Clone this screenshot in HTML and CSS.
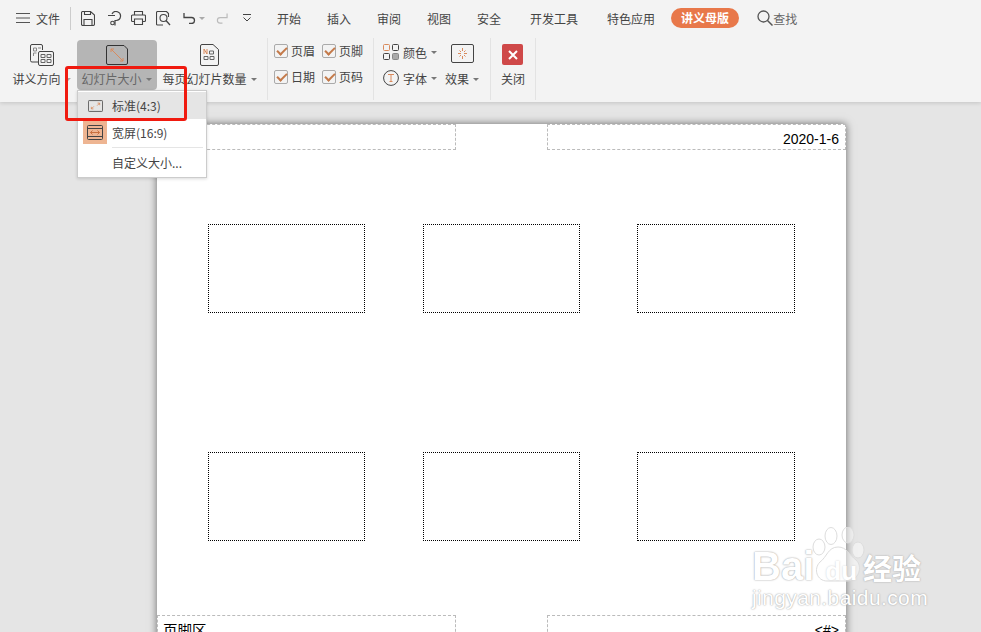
FILE: index.html

```html
<!DOCTYPE html>
<html lang="zh-CN">
<head>
    <meta charset="UTF-8">
    <title>讲义母版</title>
    <link rel="stylesheet" href="styles.css">
</head>
<body>
    <div class="ribbon">
        <div class="topbar">
            <svg class="menu-ico" width="14" height="10" viewBox="0 0 14 10"><path d="M0 .5h14M0 5h14M0 9.5h14" stroke="#555" fill="none"/></svg>
            <span class="file">文件</span>
            <span class="divider"></span>
            <div class="quick">
                <svg width="14" height="15" viewBox="0 0 14 15"><path d="M1.500.5h8l4 3.500v9a1.500 1.500 0 0 1-1.500 1.500H1.500a1.500 1.500 0 0 1-1-1.500V2a1.500 1.500 0 0 1 1-1.500zM3 14.500v-6h8v6M3.500.5v3h6v-3" stroke="#444" fill="none" stroke-width="1.100"/></svg>
                <svg width="14" height="15" viewBox="0 0 14 15"><path d="M0 4.500h7M4 3a4.500 4.500 0 1 1 4 6.500H7v5" stroke="#444" fill="none" stroke-width="1.200"/><circle cx="4.500" cy="12" r="1.800" stroke="#444" fill="none" stroke-width="1.100"/></svg>
                <svg width="15" height="14" viewBox="0 0 15 14"><path d="M3.500 4V.5h8V4M3 10.500H1.500a1 1 0 0 1-1-1V5a1 1 0 0 1 1-1h12a1 1 0 0 1 1 1v4.500a1 1 0 0 1-1 1H12M3.500 8h8v5.500h-8z" stroke="#444" fill="none" stroke-width="1.100"/></svg>
                <svg width="15" height="15" viewBox="0 0 15 15"><path d="M7 14H1.500a1 1 0 0 1-1-1V1.500a1 1 0 0 1 1-1h9l2 2V6" stroke="#444" fill="none" stroke-width="1.100"/><circle cx="7.500" cy="7" r="3.500" stroke="#444" fill="none" stroke-width="1.100"/><path d="M10 9.500l4 4.500" stroke="#444" stroke-width="1.300"/></svg>
                <svg class="undo" width="13" height="12" viewBox="0 0 13 12"><path d="M3.500 5.500h5a3 3 0 0 1 0 6H6M1 1v4.500h4.500" stroke="#444" fill="none" stroke-width="1.300"/></svg>
                <span class="caret small"></span>
                <svg class="redo" width="12" height="12" viewBox="0 0 13 12"><path d="M9.500 5.500h-5a3 3 0 0 0 0 6H7M12 1v4.500H7.500" stroke="#bbb" fill="none" stroke-width="1.300"/></svg>
                <svg class="more" width="8" height="8" viewBox="0 0 8 8"><path d="M0 .5h8M.5 3.500L4 7l3.500-3.500" stroke="#444" fill="none"/></svg>
            </div>
            <ul class="tabs">
                <li>开始</li>
                <li>插入</li>
                <li>审阅</li>
                <li>视图</li>
                <li>安全</li>
                <li class="wide">开发工具</li>
                <li class="wide">特色应用</li>
            </ul>
            <span class="pill">讲义母版</span>
            <div class="search">
                <svg width="16" height="16" viewBox="0 0 16 16"><circle cx="6.500" cy="6.500" r="5.500" stroke="#555" fill="none" stroke-width="1.300"/><path d="M10.500 10.500l5 5" stroke="#555" stroke-width="1.500"/></svg>
                <span>查找</span>
            </div>
        </div>
        <div class="tools">
            <div class="group group-size">
                <div class="tool tool-dir">
                    <svg width="24" height="22" viewBox="0 0 24 22"><path d="M9 18H2a1.500 1.500 0 0 1-1.500-1.500V2A1.500 1.500 0 0 1 2 .5h9A1.500 1.500 0 0 1 12.500 2v4" stroke="#444" fill="none"/><path d="M3.500 4h3v3h-3zM8 4h3M3.500 9h3M3.500 9v3" stroke="#888" fill="none"/><rect x="8.500" y="7.500" width="15" height="14" rx="1.500" fill="#f3f3f3" stroke="#444"/><path d="M11 10.500h4v3h-4zM17 10.500h4v3h-4zM11 15.500h4v3h-4zM17 15.500h4v3h-4z" stroke="#666" fill="none"/></svg>
                    <span class="label">讲义方向<i class="caret faint"></i></span>
                </div>
                <div class="tool tool-active">
                    <svg width="22" height="20" viewBox="0 0 22 20"><path d="M2 .5h16l3.500 3.500v14a1.500 1.500 0 0 1-1.500 1.500H2A1.500 1.500 0 0 1 .5 18V2A1.500 1.500 0 0 1 2 .5z" stroke="#333" fill="#b5b5b5"/><path d="M5 4l12 12M5 4h3M5 4v3M17 16h-3M17 16v-3" stroke="#d98a5c" fill="none"/></svg>
                    <span class="label">幻灯片大小<i class="caret"></i></span>
                </div>
                <div class="tool tool-count">
                    <svg width="19" height="22" viewBox="0 0 19 22"><path d="M2 .5h11l5.500 5v14.500a1.500 1.500 0 0 1-1.500 1.500H2A1.500 1.500 0 0 1 .5 20V2A1.500 1.500 0 0 1 2 .5z" stroke="#444" fill="none"/><path d="M4 5V10M4 5l3 5V5" stroke="#d98a5c" fill="none"/><path d="M9.500 7h4v3h-4zM4 12.500h4v3H4zM10 12.500h4v3h-4z" stroke="#666" fill="none"/></svg>
                    <span class="label">每页幻灯片数量<i class="caret"></i></span>
                </div>
            </div>
            <div class="group group-checks">
                <label class="check"><i class="box"></i>页眉</label>
                <label class="check"><i class="box"></i>页脚</label>
                <label class="check"><i class="box"></i>日期</label>
                <label class="check"><i class="box"></i>页码</label>
            </div>
            <div class="group group-theme">
                <div class="theme-rows">
                    <div class="theme-row">
                        <svg width="16" height="16" viewBox="0 0 16 16"><rect x=".5" y=".5" width="6" height="6" rx="1" stroke="#d98a5c" fill="none"/><rect x="9.500" y=".5" width="6" height="6" rx="1" stroke="#444" fill="none"/><rect x=".5" y="9.500" width="6" height="6" rx="1" stroke="#444" fill="none"/><rect x="9.500" y="9.500" width="6" height="6" rx="1" fill="#aaa" stroke="#888"/></svg>
                        <span>颜色</span><i class="caret"></i>
                    </div>
                    <div class="theme-row">
                        <svg width="16" height="16" viewBox="0 0 16 16"><circle cx="8" cy="8" r="7.400" stroke="#444" fill="none"/><path d="M5 4.500h6M8 4.500v7M6.500 11.500h3" stroke="#d98a5c" fill="none"/></svg>
                        <span>字体</span><i class="caret"></i>
                    </div>
                </div>
                <div class="effect">
                    <svg width="23" height="19" viewBox="0 0 23 19"><rect x=".5" y=".5" width="22" height="18" rx="1.500" stroke="#444" fill="none"/><path d="M11.500 4v3M11.500 12v3M7 9.500h3M13 9.500h3M8.500 6.500l1.500 1.500M14.500 6.500L13 8M8.500 12.500L10 11M14.500 12.500L13 11" stroke="#d98a5c" fill="none"/></svg>
                    <span class="label">效果<i class="caret"></i></span>
                </div>
            </div>
            <div class="group group-close">
                <div class="tool">
                    <span class="close-ico"><svg width="10" height="10" viewBox="0 0 10 10"><path d="M1 1l8 8M9 1l-8 8" stroke="#fff" stroke-width="2"/></svg></span>
                    <span class="label">关闭</span>
                </div>
            </div>
        </div>
    </div>

    <div class="workspace">
        <div class="page">
            <div class="page-band">
                <div class="zone">页眉区</div>
                <div class="zone zone-r">2020-1-6</div>
            </div>
            <div class="slides">
                <div class="slide"></div>
                <div class="slide"></div>
                <div class="slide"></div>
                <div class="slide"></div>
                <div class="slide"></div>
                <div class="slide"></div>
            </div>
            <div class="page-band">
                <div class="zone">页脚区</div>
                <div class="zone zone-r">&lt;#&gt;</div>
            </div>
        </div>
    </div>

    <ul class="dropdown">
        <li class="on">
            <span class="dd-ico"><svg width="15" height="12" viewBox="0 0 18 14"><rect x=".5" y=".5" width="17" height="13" rx="1" stroke="#444" fill="none"/><path d="M4 10.500l3-3M4 10.500h2.500M4 10.500V8M14 3.500l-3 3M14 3.500h-2.500M14 3.500V6" stroke="#d98a5c" fill="none"/></svg></span>
            标准(4:3)
        </li>
        <li>
            <span class="dd-ico dd-ico-sel"><svg width="16" height="16" viewBox="0 0 16 16"><rect x=".5" y=".5" width="15" height="14" rx="1" stroke="#444" fill="none"/><path d="M.5 3.500h15M.5 11.500h15" stroke="#444"/><path d="M3.500 7.500h9M3.500 7.500l2-2M3.500 7.500l2 2M12.500 7.500l-2-2M12.500 7.500l-2 2" stroke="#c9703e" fill="none"/></svg></span>
            宽屏(16:9)
        </li>
        <li class="sep"></li>
        <li class="custom"><span class="dd-ico"></span>自定义大小...</li>
    </ul>
    <div class="highlight"></div>

    <div class="watermark">
        <svg class="paw" width="54" height="56" viewBox="0 0 54 56"><g stroke="#ddd" fill="#fff" fill-opacity=".45"><ellipse cx="19" cy="9" rx="6" ry="8.500"/><ellipse cx="36" cy="8" rx="6" ry="8"/><ellipse cx="7" cy="20" rx="6" ry="8"/><ellipse cx="46" cy="23" rx="6" ry="8"/><path d="M26 20c9 0 11 8 18 13 7 6 3 21-9 21H15C5 54 1 42 8 35c7-5 8-15 18-15z"/></g></svg>
        <div class="wm-row"><span>Bai</span><span class="wm-du">du</span><span class="wm-cn">经验</span></div>
        <div class="wm-url">jingyan.baidu.com</div>
    </div>
</body>
</html>
```

FILE: styles.css

```css
*{
    margin: 0;
    padding: 0;
    box-sizing: border-box;
}
html,body{
    width: 100%;
    height: 100%;
    overflow: hidden;
}
body{
    position: relative;
    background: #e5e5e5;
    font-family: "Noto Sans CJK SC", "Liberation Sans", sans-serif;
    font-size: 12px;
    color: #444;
}
ul{
    list-style: none;
}
i{
    font-style: normal;
}
svg{
    display: block;
    flex: none;
}
.ribbon{
    position: relative;
    height: 102px;
    background: #f3f3f3;
    box-shadow: 0 1px 4px rgba(0,0,0,.15);
}
.topbar{
    display: flex;
    align-items: center;
    height: 38px;
    padding-left: 16px;
    padding-bottom: 2px;
}
.file{
    margin-left: 6px;
}
.divider{
    width: 1px;
    height: 23px;
    margin-left: 10px;
    background: #ccc;
}
.quick{
    display: flex;
    align-items: center;
    margin-left: 10px;
    width: 196px;
}
.quick svg{
    margin-right: 11px;
}
.quick svg:nth-child(2){
    margin-left: 2px;
    margin-right: 9px;
}
.quick svg:nth-child(4){
    margin-left: -1px;
}
.quick .undo{
    margin-right: 3px;
    margin-left: 1px;
}
.quick .redo{
    margin-left: 11px;
    margin-right: 15px;
}
.quick .more{
    margin-right: 0;
}
.tabs{
    display: flex;
}
.tabs li{
    margin-right: 26px;
}
.tabs li.wide{
    margin-left: 3px;
}
.pill{
    margin-left: -10px;
    width: 68px;
    height: 20px;
    border-radius: 10px;
    background: #e8784a;
    color: #fff;
    font-weight: 700;
    text-align: center;
    line-height: 20px;
}
.search{
    display: flex;
    align-items: center;
    margin-left: 18px;
    color: #666;
}
.tools{
    display: flex;
    height: 64px;
}
.group{
    display: flex;
    height: 62px;
    border-right: 1px solid #e3e3e3;
}
.group-size{
    width: 268px;
    padding-left: 5px;
    padding-top: 2px;
}
.tool{
    display: flex;
    flex-direction: column;
    align-items: center;
    height: 50px;
    padding-top: 4px;
    border-radius: 4px;
}
.tool .label{
    margin-top: auto;
    margin-bottom: 3px;
}
.tool-dir{
    width: 72px;
    padding-left: 1px;
}
.tool-active{
    width: 80px;
    padding-top: 5px;
    padding-right: 1px;
    background: #b5b5b5;
    color: #666;
}
.tool-count{
    width: 105px;
}
.label{
    display: flex;
    align-items: center;
    line-height: 16px;
    white-space: nowrap;
}
.caret{
    display: inline-block;
    flex: none;
    width: 0;
    height: 0;
    margin-left: 4px;
    border-left: 3px solid transparent;
    border-right: 3px solid transparent;
    border-top: 3px solid #777;
}
.caret.faint{
    border-top-color: #aaa;
}
.caret.small{
    margin-left: 0;
    border-top-color: #aaa;
}
.group-checks{
    display: grid;
    grid-template-columns: 41px 41px;
    grid-auto-rows: 16px;
    column-gap: 7px;
    row-gap: 10px;
    width: 106px;
    padding-left: 6px;
    padding-top: 5px;
}
.check{
    display: flex;
    align-items: center;
    gap: 3px;
    line-height: 16px;
}
.box{
    position: relative;
    width: 14px;
    height: 14px;
    border: 1px solid #aaa;
    border-radius: 2px;
}
.box:after{
    content: "";
    position: absolute;
    left: 2px;
    top: 2px;
    width: 8px;
    height: 4px;
    border-left: 2px solid #c47a4a;
    border-bottom: 2px solid #c47a4a;
    transform: rotate(-45deg);
}
.group-theme{
    width: 117px;
    padding-left: 9px;
    padding-top: 6px;
}
.theme-rows{
    display: flex;
    flex-direction: column;
    gap: 10px;
    width: 59px;
}
.theme-row{
    display: flex;
    align-items: center;
    height: 16px;
}
.theme-row span{
    margin-left: 4px;
}
.effect{
    display: flex;
    flex-direction: column;
    align-items: center;
    width: 40px;
}
.effect .label{
    margin-top: 8px;
}
.group-close{
    width: 45px;
    justify-content: center;
    padding-top: 2px;
}
.close-ico{
    display: flex;
    align-items: center;
    justify-content: center;
    width: 21px;
    height: 21px;
    border-radius: 2px;
    background: #cf4848;
}
.workspace{
    padding: 22px 0 0 157px;
}
.page{
    display: flex;
    flex-direction: column;
    width: 689px;
    height: 700px;
    background: #fff;
    box-shadow: 0 0 8px rgba(0,0,0,.55);
    color: #000;
}
.page-band{
    display: flex;
    justify-content: space-between;
}
.zone{
    width: 299px;
    height: 26px;
    padding: 3px 6px 0 5px;
    border: 1px dashed #bbb;
    font-size: 14.500px;
    line-height: 22px;
    white-space: nowrap;
}
.zone-r{
    font-family: "Liberation Sans", sans-serif;
    font-size: 14px;
    text-align: right;
}
.slides{
    display: grid;
    grid-template-columns: 157px 157px 158px;
    grid-template-rows: 89px 89px;
    column-gap: 57.500px;
    row-gap: 139px;
    padding: 74px 0 74px 51px;
}
.slide{
    border: 1px dotted #000;
}
.dropdown{
    position: absolute;
    left: 77px;
    top: 90px;
    width: 130px;
    height: 88px;
    padding-top: 1px;
    background: #fff;
    border: 1px solid #ccc;
    box-shadow: 0 1px 3px rgba(0,0,0,.15);
}
.dropdown li{
    display: flex;
    align-items: center;
    height: 27px;
}
.dropdown li.on{
    background: #e5e5e5;
}
.dropdown li.sep{
    height: 1px;
    margin: 1px 3px 0 34px;
    background: #e5e5e5;
}
.dropdown li.custom{
    height: 28px;
}
.dd-ico{
    display: flex;
    align-items: center;
    justify-content: center;
    width: 24px;
    height: 23px;
    margin: 0 5px;
}
.dd-ico-sel{
    background: #eeb592;
}
.highlight{
    position: absolute;
    left: 65px;
    top: 66px;
    width: 122px;
    height: 55px;
    border: 3px solid #f01a0f;
    border-radius: 3px;
}
.watermark{
    position: absolute;
    left: 752px;
    top: 527px;
    width: 180px;
    height: 86px;
    color: #fff;
    font-family: "Liberation Sans", sans-serif;
    text-shadow: 0 0 2px #aaa, 0 0 1px #bbb;
}
.paw{
    position: absolute;
    left: 60px;
    top: 0;
}
.wm-row{
    position: absolute;
    left: 0;
    top: 17px;
    display: flex;
    align-items: baseline;
    font-size: 40px;
    line-height: 44px;
    font-weight: 700;
}
.wm-du{
    margin-left: 11px;
    font-size: 26px;
    text-shadow: 0 0 2px #ccc;
}
.wm-cn{
    margin-left: 6px;
    font-family: "Noto Sans CJK SC", sans-serif;
    font-size: 29px;
}
.wm-url{
    position: absolute;
    left: 0;
    top: 59px;
    font-size: 21px;
    letter-spacing: .4px;
    white-space: nowrap;
}
```
